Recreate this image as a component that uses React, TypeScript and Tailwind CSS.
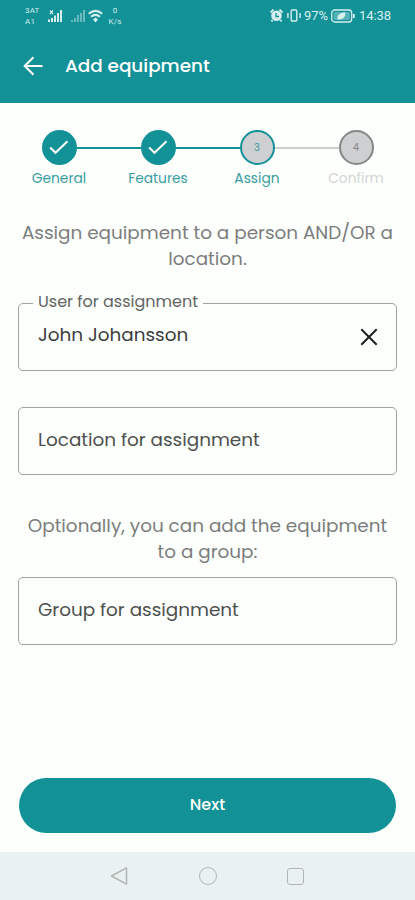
import React from "react";

const steps = [
  { label: "General", state: "done", before: "bg-transparent", after: "bg-[#129197]" },
  { label: "Features", state: "done", before: "bg-[#129197]", after: "bg-[#129197]" },
  { label: "Assign", state: "active", before: "bg-[#129197]", after: "bg-[#cdcfce]" },
  { label: "Confirm", state: "next", before: "bg-[#cdcfce]", after: "bg-transparent" },
];

function StatusBar() {
  return (
    <div className="flex h-[31px] items-center justify-between pl-[25px] pr-[23px] font-[Roboto,sans-serif] text-[#d5eff0]">
      <div className="flex items-center">
        <div className="w-[23px] pt-px text-[8px] leading-[11px] tracking-[0.2px]">
          <div>3AT</div>
          <div>A1</div>
        </div>
        {/* SIM 1 */}
        <svg width="14" height="14" viewBox="0 0 14 14" fill="currentColor">
          <path d="M0 10.500h2V13H0zM3 9h2v4H3zM6 6.500h2V13H6zM9 4h2v9H9zM12 1h2v12h-2z" />
          <path d="M2 1.500l3 3.500M5 1.500L2 5" stroke="currentColor" strokeWidth="1.200" />
        </svg>
        {/* SIM 2 */}
        <svg className="ml-[9px] opacity-45" width="14" height="14" viewBox="0 0 14 14" fill="currentColor">
          <path d="M0 11h2v2H0zM3 9h2v4H3zM6 6h2v7H6zM9 4h2v9H9zM12 1h2v12h-2z" />
        </svg>
        <svg className="ml-[3px]" width="15" height="14" viewBox="0 0 15 14" fill="none" stroke="currentColor" strokeWidth="2">
          <path d="M.7 4.700Q7.500-.9 14.300 4.700M3 7.700Q7.500 4 12 7.700" />
          <path d="M7.500 8.500l2.500 2-2.500 3-2.500-3z" fill="currentColor" stroke="none" />
        </svg>
        <div className="ml-[4px] w-[16px] text-center text-[8px] leading-[11px] tracking-[0.2px]">
          <div>0</div>
          <div>K/s</div>
        </div>
      </div>
      <div className="flex items-center">
        <svg width="13" height="13" viewBox="0 0 13 13">
          <path d="M.5 3.500l3-3M9.500.5l3 3M2.500 11l-1 1.500M10.500 11l1 1.500" stroke="currentColor" strokeWidth="1.800" />
          <circle cx="6.500" cy="6.800" r="5.300" fill="currentColor" />
          <path d="M6 4v3.500h3" fill="none" stroke="#129197" strokeWidth="1.300" />
        </svg>
        <svg className="ml-1" width="14" height="13" viewBox="0 0 14 13" fill="none" stroke="currentColor" strokeWidth="1.400">
          <rect x="4.200" y="1" width="5.600" height="11" rx="1" />
          <path d="M.9 4v5M13.100 4v5" />
        </svg>
        <span className="ml-[3px] w-[27px] whitespace-nowrap text-[13px]">97%</span>
        <svg width="24" height="14" viewBox="0 0 24 14" fill="none" stroke="currentColor" strokeWidth="1.300">
          <rect x=".7" y="1" width="20" height="12" rx="3" />
          <rect x="2.500" y="3" width="16.400" height="8" rx="1.500" fill="currentColor" fillOpacity=".35" stroke="none" />
          <path d="M22.800 5v4" strokeWidth="1.800" />
          <path d="M6.500 10.500C6 5.500 9 3.500 14.500 3.500C14.500 8.500 11.500 11 6.500 10.500z" fill="currentColor" stroke="none" />
        </svg>
        <span className="ml-[4px] w-[33px] whitespace-nowrap text-[13px] tracking-[-0.1px]">14:38</span>
      </div>
    </div>
  );
}

function Stepper() {
  return (
    <div className="grid grid-cols-[repeat(4,99px)] justify-center pt-[27px]">
      {steps.map((step, i) => (
        <div key={step.label} className="flex flex-col items-center">
          <div className="flex w-full items-center">
            <span className={`h-[2px] flex-1 ${step.before}`} />
            {step.state === "done" && (
              <span className="flex size-[35px] items-center justify-center rounded-full bg-[#129197]">
                <svg width="20" height="15" viewBox="0 0 20 15" fill="none" stroke="#fff" strokeWidth="2">
                  <path d="M1.200 7.500l5.300 5.300L18.500 1.300" />
                </svg>
              </span>
            )}
            {step.state === "active" && (
              <span className="flex size-[35px] items-center justify-center rounded-full border-2 border-[#129197] bg-[#cecfd0] text-[10px] text-[#3c9da3]">
                {i + 1}
              </span>
            )}
            {step.state === "next" && (
              <span className="flex size-[35px] items-center justify-center rounded-full border-2 border-[#858686] bg-[#cecfd0] text-[10px] text-[#858686]">
                {i + 1}
              </span>
            )}
            <span className={`h-[2px] flex-1 ${step.after}`} />
          </div>
          <span
            className={`mt-[4px] text-[13.8px] leading-5 ${
              step.state === "next" ? "text-[#d3d5d4]" : "text-[#3a9da2]"
            }`}
          >
            {step.label}
          </span>
        </div>
      ))}
    </div>
  );
}

export default function App() {
  return (
    <div className="flex h-[900px] w-[415px] flex-col overflow-hidden bg-[#fdfffd] font-['Poppins','Inter',sans-serif]">
      {/* Header */}
      <header className="h-[103px] bg-[#129197]">
        <StatusBar />
        <div className="flex h-[70px] items-center pl-[23px]">
          <svg width="20" height="20" viewBox="0 0 20 20" fill="none" stroke="#fff" strokeWidth="2">
            <path d="M19.500 10H2M10.500 1.200L1.700 10l8.800 8.800" />
          </svg>
          <h1 className="ml-[22px] pb-px text-[18.4px] font-medium text-white">Add equipment</h1>
        </div>
      </header>

      <main className="flex flex-1 flex-col">
        <Stepper />

        <p className="mt-[31px] whitespace-nowrap text-center text-[18.4px] leading-[26px] text-[#7b7d7c]">
          Assign equipment to a person AND/OR a
          <br />
          location.
        </p>

        {/* Assignment fields */}
        <div className="relative mx-[18px] mt-[31px] flex h-[68px] items-center justify-between rounded-[5px] border border-[#a0a2a1] pl-[19px] pr-[18px]">
          <span className="absolute -top-[13px] left-[14px] whitespace-nowrap bg-[#fdfffd] px-[5px] text-[16px] leading-[22px] text-[#626463]">
            User for assignment
          </span>
          <span className="pb-[5px] text-[18.4px] text-[#3b3d3c]">John Johansson</span>
          <svg width="18" height="18" viewBox="0 0 18 18" fill="none" stroke="#1d1f1e" strokeWidth="2">
            <path d="M1.300 1.300l15.400 15.400M16.700 1.300L1.300 16.700" />
          </svg>
        </div>
        <div className="mx-[18px] mt-[36px] flex h-[68px] items-center rounded-[5px] border border-[#a0a2a1] pl-[19px] pb-[3px]">
          <span className="text-[18.4px] text-[#4d4f4e]">Location for assignment</span>
        </div>

        <p className="mt-[38px] whitespace-nowrap text-center text-[18.4px] leading-[26px] text-[#7b7d7c]">
          Optionally, you can add the equipment
          <br />
          to a group:
        </p>

        <div className="mx-[18px] mt-[12px] flex h-[68px] items-center rounded-[5px] border border-[#a0a2a1] pl-[19px] pb-[3px]">
          <span className="text-[18.4px] text-[#4d4f4e]">Group for assignment</span>
        </div>

        <button className="mx-[19px] mb-[19px] mt-auto h-[55px] rounded-full bg-[#129197] pb-[2px] text-[16px] font-medium text-white">
          Next
        </button>
      </main>

      {/* System navigation */}
      <nav className="flex h-[48px] items-center bg-[#e9f2f1] pl-[110px]">
        <svg width="18" height="20" viewBox="0 0 18 20" fill="none" stroke="#b1b6b4" strokeWidth="1.500" strokeLinejoin="round">
          <path d="M16.500 1.800v16.400L1.500 10z" />
        </svg>
        <span className="ml-[71px] size-[18px] rounded-full border-[1.500px] border-[#b1b6b4]" />
        <span className="ml-[70px] size-[17px] rounded-[3px] border-[1.500px] border-[#b1b6b4]" />
      </nav>
    </div>
  );
}
